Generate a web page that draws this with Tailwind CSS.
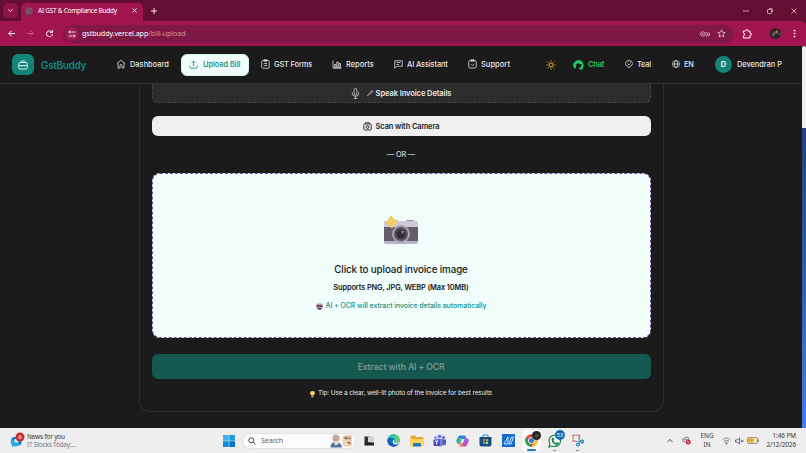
<!DOCTYPE html>
<html lang="en">
<head>
  <meta charset="UTF-8">
  <title>AI GST &amp; Compliance Buddy</title>
  <meta name="viewport" content="width=device-width, initial-scale=1.0">
  <script src="https://cdn.jsdelivr.net/npm/@tailwindcss/browser@4"></script>
</head>
<body class="w-[806px] h-[453px] overflow-hidden bg-[#1b1b1b] flex flex-col font-['Inter',sans-serif] text-[#e8e8e8] whitespace-nowrap">

  <!-- Browser tabs -->
  <div class="h-[21px] shrink-0 bg-[#640e33] flex items-center">
    <div class="ml-[3px] w-[15px] h-[15px] rounded-[5px] bg-[#8f134a] flex items-center justify-center">
      <svg class="w-[5px] h-[5px]" viewBox="0 0 10 10" fill="none" stroke="#fff" stroke-width="2"><path d="M1 3l4 4 4-4"/></svg>
    </div>
    <div class="ml-[3px] mt-[3px] w-[122px] h-[18px] rounded-t-[5px] bg-[#a01450] flex items-center pb-[3px]">
      <svg class="ml-[4px] w-[8px] h-[8px]" viewBox="0 0 16 16"><circle cx="8" cy="8" r="7.5" fill="#606066"/><path d="M2 5l5-3 1 3-3 3-3-1zM9 8l5-2-1 6-4 2-2-4z" fill="#963564"/></svg>
      <span class="ml-[5px] mt-px w-[89px] font-['Noto_Sans',sans-serif] text-[6.5px] tracking-[-0.26px] text-white">AI GST &amp; Compliance Buddy</span>
      <svg class="ml-[5px] w-[5px] h-[5px] shrink-0" viewBox="0 0 10 10" stroke="#fff" stroke-width="2"><path d="M1 1l8 8M9 1l-8 8"/></svg>
    </div>
    <svg class="ml-[8px] w-[6px] h-[6px]" viewBox="0 0 12 12" stroke="#f3dce6" stroke-width="2"><path d="M6 0v12M0 6h12"/></svg>
    <div class="ml-auto mr-[9px] flex items-center gap-[18px]">
      <svg class="w-[6px] h-[6px]" viewBox="0 0 12 12" stroke="#e0bccc" stroke-width="1.5"><path d="M0 6h12"/></svg>
      <svg class="w-[6px] h-[6px]" viewBox="0 0 12 12" fill="none" stroke="#e0bccc" stroke-width="1.5"><rect x="1" y="3" width="8" height="8" rx="1"/><path d="M4 1h5q2 0 2 2v5"/></svg>
      <svg class="w-[6px] h-[6px]" viewBox="0 0 12 12" stroke="#ecd2de" stroke-width="1.5"><path d="M1 1l10 10M11 1L1 11"/></svg>
    </div>
  </div>

  <!-- Address bar -->
  <div class="h-[25px] shrink-0 bg-[#a01450] rounded-tr-[4px] flex items-center">
    <svg class="ml-[8px] w-[7px] h-[7px]" viewBox="0 0 14 14" fill="none" stroke="#fff" stroke-width="2"><path d="M14 7H2M7 1.500L1.500 7 7 12.500"/></svg>
    <svg class="ml-[12px] w-[7px] h-[7px]" viewBox="0 0 14 14" fill="none" stroke="#c8658f" stroke-width="1.800"><path d="M0 7h12M7 1.500L12.500 7 7 12.500"/></svg>
    <svg class="ml-[12px] w-[7px] h-[7px]" viewBox="0 0 14 14" fill="none" stroke="#fff" stroke-width="2"><path d="M12 4.500A6 6 0 1 0 13 8M13 0v5H8"/></svg>
    <div class="ml-[10px] w-[671px] h-[18px] rounded-full bg-[#7f1845] flex items-center shrink-0">
      <span class="ml-[2px] w-[14px] h-[14px] rounded-full bg-[#991d54] flex items-center justify-center">
        <svg class="w-[8px] h-[8px]" viewBox="0 0 16 16" fill="none" stroke="#f3dce6" stroke-width="2"><circle cx="4" cy="4" r="2"/><path d="M8 4h7M1 12h7"/><circle cx="12" cy="12" r="2"/></svg>
      </span>
      <span class="ml-[3px] font-['Noto_Sans',sans-serif] text-[7.2px] tracking-[-0.1px] text-white">gstbuddy.vercel.app<span class="text-[#d08fab]">/bill-upload</span></span>
      <svg class="ml-auto w-[10px] h-[8px]" viewBox="0 0 20 16" fill="none" stroke="#d9a0b9" stroke-width="1.800"><circle cx="5.500" cy="8" r="4.500"/><circle cx="5.500" cy="8" r="1.200"/><path d="M10 6h9v5h-3v-2h-2v3h-3"/></svg>
      <svg class="ml-[7px] mr-[8px] w-[9px] h-[9px]" viewBox="0 0 18 18" fill="none" stroke="#ecc9d8" stroke-width="1.600"><path d="M9 1.500l2.200 5 5.300.5-4 3.600 1.200 5.400L9 13.200 4.300 16l1.200-5.400-4-3.600 5.300-.5z"/></svg>
    </div>
    <svg class="ml-[8px] w-[10px] h-[10px]" viewBox="0 0 20 20" fill="none" stroke="#fff" stroke-width="2"><path d="M3 4h4.500V3a2 2 0 0 1 4 0v1H16v4.500h1a2 2 0 0 1 0 4h-1V18H3v-4.500a2.500 2.500 0 0 0 0-5z"/></svg>
    <span class="ml-[9px] w-px h-[9px] bg-[#8a1548]"></span>
    <svg class="ml-[8px] w-[11px] h-[11px]" viewBox="0 0 22 22"><circle cx="11" cy="11" r="11" fill="#292326"/><path d="M3 11l6-5 3 4-5 8z" fill="#625c5f"/><path d="M12 4l4 2-2 6-3-2z" fill="#bb7046"/><path d="M16 11l5-2-2 6z" fill="#46626b"/></svg>
    <svg class="ml-[12px] w-[3px] h-[9px]" viewBox="0 0 6 18" fill="#fff"><circle cx="3" cy="3" r="1.700"/><circle cx="3" cy="9" r="1.700"/><circle cx="3" cy="15" r="1.700"/></svg>
  </div>

  <div class="flex-1 min-h-0 flex">
    <div class="w-[802px] flex flex-col">

      <!-- Navigation -->
      <header class="h-[38px] shrink-0 border-b border-[#333] flex items-center text-[7.4px] font-medium">
        <div class="w-[116px] pl-[12px] flex items-center">
          <span class="w-[22px] h-[21px] rounded-[6px] bg-[#128478] flex items-center justify-center">
            <svg class="w-[10px] h-[10px]" viewBox="0 0 20 20" fill="none" stroke="#e7fffb" stroke-width="1.800"><rect x="1.500" y="5" width="17" height="13" rx="2.500"/><path d="M6 5V4q0-2 2-2h4q2 0 2 2v1M2 11h16M7 10v3M13 10v3"/></svg>
          </span>
          <span class="ml-[7px] pt-px text-[10px] font-semibold tracking-[-0.33px] text-[#14877b]">GstBuddy</span>
        </div>
        <div class="w-[65px] flex items-center gap-[4px]">
          <svg class="w-[10px] h-[10px] shrink-0" viewBox="0 0 20 20" fill="none" stroke="#ddd" stroke-width="1.600"><path d="M2 9l8-7 8 7M4 8v10h4v-6q2-2 4 0v6h4V8"/></svg>
          <span class="pt-px tracking-[0.04px]">Dashboard</span>
        </div>
        <div class="w-[68px] h-[22px] rounded-[6px] bg-[#f0fdfa] border border-[#d5f3ee] pl-[7px] flex items-center gap-[5px] text-[#14877b]">
          <svg class="w-[9px] h-[9px] shrink-0" viewBox="0 0 18 18" fill="none" stroke="currentColor" stroke-width="1.600"><path d="M9 12V2M5 6l4-4 4 4M1.500 11v3q0 2.500 2.500 2.500h10q2.500 0 2.500-2.500v-3"/></svg>
          <span class="pt-px tracking-[-0.02px]">Upload Bill</span>
        </div>
        <div class="w-[83px] pl-[12px] flex items-center gap-[4px]">
          <svg class="w-[9px] h-[10px] shrink-0" viewBox="0 0 18 20" fill="none" stroke="#ddd" stroke-width="1.600"><rect x="1.500" y="3" width="15" height="15.500" rx="2.500"/><path d="M6 1.500h6v3H6zM5.500 9h7M5.500 13h7"/></svg>
          <span class="pt-px tracking-[-0.12px]">GST Forms</span>
        </div>
        <div class="w-[62px] flex items-center gap-[4px]">
          <svg class="w-[10px] h-[9px] shrink-0" viewBox="0 0 20 18" fill="none" stroke="#ddd" stroke-width="1.600"><path d="M2 1v15.500h17M5 9h3v6H5zM9.500 4h3v11h-3zM14 7h3v8h-3z" /></svg>
          <span class="pt-px tracking-[0.03px]">Reports</span>
        </div>
        <div class="w-[74px] flex items-center gap-[4px]">
          <svg class="w-[9px] h-[9px] shrink-0" viewBox="0 0 18 18" fill="none" stroke="#ddd" stroke-width="1.600"><path d="M1.500 1.500h15v11h-11l-4 4zM5 5h8M5 9h5"/></svg>
          <span class="pt-px tracking-[-0.1px]">AI Assistant</span>
        </div>
        <div class="w-[78px] flex items-center gap-[4px]">
          <svg class="w-[9px] h-[10px] shrink-0" viewBox="0 0 18 20" fill="none" stroke="#ddd" stroke-width="1.600"><rect x="1.500" y="3" width="15" height="15" rx="2.500"/><path d="M6 1.500h6v3H6zM5.500 10.500l3 3 4-4"/></svg>
          <span class="pt-px tracking-[0.1px]">Support</span>
        </div>
        <svg class="w-[10px] h-[10px] shrink-0" viewBox="0 0 20 20" fill="none" stroke="#eab52a" stroke-width="1.900"><circle cx="10" cy="10" r="4"/><path d="M10 1v2.500M10 16.500V19M1 10h2.500M16.500 10H19M3.500 3.500l2 2M14.500 14.500l2 2M16.500 3.500l-2 2M5.500 14.500l-2 2"/></svg>
        <div class="w-[69px] pl-[17px] flex items-center gap-[4px] text-[#27c65d]">
          <svg class="w-[11px] h-[11px] shrink-0" viewBox="0 0 22 22" fill="#27c65d"><path d="M4 20Q-1 15 1 9 4 2 12 2q8 1 9 9 1 6-3 10l-4-4q4-3 3-7-4 1-7-2-4 2-4 6 0 4-2 6z"/><path d="M9 18q3 2 6-1l4 4h-5z"/></svg>
          <span class="pt-px tracking-[-0.15px] font-semibold">Chat</span>
        </div>
        <div class="w-[47px] flex items-center gap-[4px]">
          <svg class="w-[8px] h-[8px] shrink-0" viewBox="0 0 16 16" fill="none" stroke="#ddd" stroke-width="1.500"><path d="M8 15Q5 15 5 12 1 11 1 7q0-6 7-6t7 6q0 4-4 5 0 3-3 3z"/><path d="M4 7h1M6 4h1M10 4h1M11 7h1M6 9h4"/></svg>
          <span class="pt-px tracking-[-0.22px]">Teal</span>
        </div>
        <div class="w-[43px] flex items-center gap-[4px]">
          <svg class="w-[8px] h-[8px] shrink-0" viewBox="0 0 16 16" fill="none" stroke="#ddd" stroke-width="1.400"><circle cx="8" cy="8" r="7"/><ellipse cx="8" cy="8" rx="3" ry="7"/><path d="M1 8h14"/></svg>
          <span class="pt-px tracking-[-0.3px]">EN</span>
        </div>
        <span class="w-[17px] h-[17px] rounded-full bg-[#128478] shrink-0 flex items-center justify-center font-semibold text-white">D</span>
        <span class="ml-[5px] pt-px tracking-[-0.03px]">Devendran P</span>
      </header>

      <!-- Upload card -->
      <main class="ml-[138.5px] w-[525px] h-[328px] px-[12px] border border-t-0 border-[#2d2d2d] rounded-b-[11px] flex flex-col items-center">
        <div class="w-[499px] h-[19px] shrink-0 bg-[#2c2c2c] border border-t-0 border-dashed border-[#444] rounded-b-[6px] flex items-center justify-center">
          <svg class="w-[9px] h-[11px]" viewBox="0 0 18 24" fill="none" stroke="#ddd" stroke-width="1.600"><rect x="6" y="1" width="6" height="14" rx="3"/><path d="M2 9v3q0 6 7 6t7-6V9M9 18v5M5 23h8"/></svg>
          <svg class="ml-[6px] w-[8px] h-[8px]" viewBox="0 0 16 16"><path d="M2 14l8-9 2 2z" fill="#9c8ca5" stroke="#9c8ca5" stroke-width="1.500"/><circle cx="12" cy="4.500" r="3" fill="#746c7d"/></svg>
          <span class="ml-[2px] pt-px text-[7.5px] font-semibold tracking-[-0.08px]">Speak Invoice Details</span>
        </div>
        <div class="mt-[13px] w-[499px] h-[20px] shrink-0 bg-[#efefef] rounded-[6px] flex items-center justify-center text-[#1b1b1b]">
          <svg class="w-[9px] h-[9px]" viewBox="0 0 18 18" fill="none" stroke="currentColor" stroke-width="1.700"><rect x="1.500" y="4" width="15" height="12" rx="2"/><path d="M5 4V1.500h8V4"/><circle cx="9" cy="10" r="3"/><path d="M8.500 10h1"/></svg>
          <span class="ml-[4px] pt-px text-[7.5px] font-semibold tracking-[-0.12px]">Scan with Camera</span>
        </div>
        <div class="h-[37px] pt-[2px] shrink-0 flex items-center text-[7.3px] tracking-[-0.2px]">— OR —</div>
        <div class="w-[499px] h-[165px] shrink-0 bg-[#f0fdfa] border border-dashed border-[#6655a5] rounded-[8px] flex flex-col items-center text-[#161b1a]">
          <svg class="mt-[42px] w-[34px] h-[29px] shrink-0" viewBox="0 0 34 29">
            <rect x="22" y="4" width="8" height="5" rx="1" fill="#9289a0"/>
            <rect x="0" y="5" width="34" height="23" rx="2" fill="#bdb1d0"/>
            <path d="M2 5h30q2 0 2 3v3H0V8q0-3 2-3z" fill="#cfc8d7"/>
            <rect x="0" y="11" width="34" height="14" fill="#635e68"/>
            <circle cx="17" cy="18" r="9" fill="#aaa0b8"/>
            <circle cx="17" cy="18" r="7" fill="#56505f"/>
            <circle cx="17" cy="18" r="4.500" fill="#302b39"/>
            <circle cx="18.500" cy="16" r="1.500" fill="#817790"/>
            <path d="M7 0q3 4 7 5-4 3-6 7-3-4-7-5 4-3 6-7z" fill="#f0cd67" stroke="#f0cd67" stroke-linejoin="round"/>
          </svg>
          <p class="mt-[17px] h-[15px] leading-[15px] text-[9.8px] font-medium tracking-[-0.12px]">Click to upload invoice image</p>
          <p class="mt-[5px] h-[11px] leading-[11px] text-[7.4px] font-semibold tracking-[-0.11px]">Supports PNG, JPG, WEBP (Max 10MB)</p>
          <p class="mt-[7px] h-[12px] leading-[12px] flex items-center text-[7px] font-medium tracking-[-0.08px] text-[#219486]">
            <svg class="mr-[3px] w-[7px] h-[7px]" viewBox="0 0 14 14"><rect x="1" y="1" width="12" height="12" rx="2" fill="#a99bbd"/><path d="M0 5h14v3H0z" fill="#a65462"/><circle cx="5" cy="6" r="1.500" fill="#292435"/><circle cx="9" cy="6" r="1.500" fill="#292435"/><path d="M4 10h6v3H4z" fill="#454052"/></svg>
            AI + OCR will extract invoice details automatically
          </p>
        </div>
        <div class="mt-[16px] pt-px w-[499px] h-[25px] shrink-0 rounded-[6px] bg-[#14584f] flex items-center justify-center text-[8.6px] font-semibold tracking-[-0.1px] text-[#7b958f]">Extract with AI + OCR</div>
        <p class="mt-[9px] h-[12px] flex items-center text-[6.5px] tracking-[-0.13px]">
          <svg class="mr-[3px] w-[5px] h-[7px]" viewBox="0 0 10 14"><path d="M5 0q5 0 5 4 0 2-3 5H3Q0 6 0 4q0-4 5-4z" fill="#ffd05b"/><path d="M3 9h4v4H3z" fill="#b7a183"/></svg>
          Tip: Use a clear, well-lit photo of the invoice for best results
        </p>
      </main>
    </div>
    <div class="w-[4px] flex flex-col">
      <div class="h-[82px] bg-[#f1f1f1] rounded-t-[2px]"></div>
      <div class="flex-1 bg-gradient-to-b from-[#1d4280] to-[#427ee8]"></div>
    </div>
  </div>

  <!-- Taskbar -->
  <footer class="h-[25px] shrink-0 bg-[#eeeeee] flex items-center font-['Noto_Sans',sans-serif] text-[#333] text-[6.4px]">
    <div class="w-[217px] pl-[10px] flex items-center">
      <svg class="w-[15px] h-[17px] shrink-0" viewBox="0 0 30 34"><path d="M3 14q0-4 5-4h10q5 0 5 5v6q0 6-6 6H9l-5 3 1-5q-4-3-2-11z" fill="#1683ca"/><path d="M1 20q6-7 12-2l7 7-8 4q-9 1-11-9z" fill="#29a8e0"/><rect x="9" y="14" width="8" height="7" rx="2" fill="#d8f3ff"/><circle cx="20" cy="10" r="9" fill="#c62f2b"/><text x="20" y="14" text-anchor="middle" font-size="12" font-family="Noto Sans" fill="#fff">6</text></svg>
      <div class="ml-[2px] leading-[8px] tracking-[-0.14px]"><div>News for you</div><div class="text-[#777] tracking-[-0.22px]">IT Stocks Today:...</div></div>
    </div>
    <div class="w-[23px] flex justify-center">
      <svg class="w-[12px] h-[12px]" viewBox="0 0 24 24"><path d="M0 0h11.500v11.500H0z" fill="#39b5eb"/><path d="M12.500 0H24v11.500H12.500z" fill="#209bdf"/><path d="M0 12.500h11.500V24H0z" fill="#1689d8"/><path d="M12.500 12.500H24V24H12.500z" fill="#0874cf"/></svg>
    </div>
    <div class="ml-[2px] w-[114px] h-[16px] rounded-full bg-[#fbfbfb] border border-[#e3e3e3] flex items-center pl-[5px] pr-[2px] text-[7.2px] text-[#666]">
      <svg class="mr-[5px] w-[8px] h-[8px]" viewBox="0 0 16 16" fill="none" stroke="#333" stroke-width="1.800"><circle cx="6.500" cy="6.500" r="5"/><path d="M10.500 10.500L15 15"/></svg>
      <span class="tracking-[-0.1px]">Search</span>
      <svg class="ml-auto w-[24px] h-[14px]" viewBox="0 0 48 28"><path d="M3 27q0-10 10-12 12 2 13 12z" fill="#4f7599"/><circle cx="14" cy="9" r="7" fill="#d3a08a"/><path d="M7 8q0-8 8-7 7 1 6 9-5-5-14-2z" fill="#b9b1ac"/><path d="M8 14q6 3 11-1v7l-6 3z" fill="#e3dfdc"/><rect x="27" y="2" width="19" height="23" rx="5" fill="#ead4b5"/><path d="M31 6q4-2 7 2l-2 3-5-1zM36 16q5-2 8 2l-4 3z" fill="#95705a"/><circle cx="41" cy="8" r="3" fill="#bd916f"/></svg>
    </div>
    <div class="ml-[2px] flex items-center">
      <div class="w-[23px] flex justify-center">
        <svg class="w-[11px] h-[10px]" viewBox="0 0 22 20"><path d="M1 1h12v14H1z" fill="#333"/><path d="M8 1h12v12H8z" fill="#d3d3d3"/><path d="M1 13h19v6H1z" fill="#222"/></svg>
      </div>
      <div class="w-[23px] ml-[1px] flex justify-center">
        <svg class="w-[13px] h-[13px]" viewBox="0 0 26 26"><circle cx="13" cy="13" r="12.500" fill="#1678c7"/><path d="M1 11Q3 0 14 1q11 1 11 11 0 6-8 6-4-1-2-4 1-6-5-7-6 0-9 4z" fill="#38c6b2"/><path d="M14 1q11 1 11 11 0 6-8 6-3-1-2-3 6-7-1-14z" fill="#65cf72"/><path d="M1 12q4-6 9-3-5 6 1 12 5 4 11 0-3 5-10 4Q1 23 1 12z" fill="#155eae"/><path d="M12 12q2 0 3 2-2 4 2 4 5 0 8-3-2 6-8 6-7-1-5-9z" fill="#eee"/></svg>
      </div>
      <div class="w-[23px] flex justify-center">
        <svg class="w-[14px] h-[12px]" viewBox="0 0 28 24"><path d="M1 3q0-2 2-2h7l3 3h11q3 0 3 3v14H1z" fill="#eba92d"/><path d="M1 8h26v12q0 3-3 3H4q-3 0-3-3z" fill="#ffd35c"/><path d="M6 18q0-2 2-2h12q2 0 2 2v5H6z" fill="#197fc1"/></svg>
      </div>
      <div class="w-[23px] flex justify-center">
        <svg class="w-[13px] h-[13px]" viewBox="0 0 26 26"><circle cx="13" cy="5" r="4" fill="#7780e0"/><circle cx="21" cy="7" r="3" fill="#5b62c6"/><circle cx="5" cy="7" r="3" fill="#8b93ec"/><path d="M7 10h13v9q0 6-6 6t-7-6z" fill="#747ee0"/><path d="M18 11h8v7q0 5-6 5z" fill="#5059c9"/><rect x="1" y="11" width="13" height="13" rx="2" fill="#4c46b7"/><path d="M4 14h7M7.500 14v7" stroke="#fff" stroke-width="2"/></svg>
      </div>
      <div class="w-[23px] flex justify-center">
        <svg class="w-[13px] h-[12px]" viewBox="0 0 26 24"><path d="M8 1h9q2 0 3 4l1 3h-6l-5 9H5q-5 0-4-6l3-7q1-3 4-3z" fill="#2887dd"/><path d="M2 15l3-9h7l-3 11H5q-3 0-3-2z" fill="#35bd8a"/><path d="M20 7q6 0 5 6l-3 7q-1 3-4 3H9q-2 0-3-4l-1-2h7l4-10z" fill="#d853ad"/><path d="M5 17h7l-2 6H9q-3 0-4-6z" fill="#f3a63b"/><path d="M17 7h4q5 0 4 6l-2 4h-7z" fill="#9e5fd5"/><path d="M11 8h6l-3 8H9z" fill="#eee"/></svg>
      </div>
      <div class="w-[23px] flex justify-center">
        <svg class="w-[13px] h-[13px]" viewBox="0 0 26 26"><path d="M8 6V2h10v4" fill="none" stroke="#2a94d2" stroke-width="2"/><path d="M1 6h24v15q0 4-4 4H5q-4 0-4-4z" fill="#174f80"/><path d="M8 10h4.500v4.500H8z" fill="#e65c37"/><path d="M13.500 10H18v4.500h-4.500z" fill="#86bd38"/><path d="M8 15.500h4.500V20H8z" fill="#35ade5"/><path d="M13.500 15.500H18V20h-4.500z" fill="#ffc73b"/></svg>
      </div>
      <div class="w-[23px] flex justify-center">
        <svg class="w-[13px] h-[13px]" viewBox="0 0 26 26"><path d="M0 0h26v26H0z" fill="#176bd0"/><path d="M4 20L12 6v14zM14 20l5-14h4l-5 14z" fill="none" stroke="#d9efff" stroke-width="1.800"/></svg>
      </div>
      <div class="w-[23px] h-[23px] flex justify-center items-center">
        <div class="relative w-[19px] h-[21px] rounded-[2px] bg-[#fafafa] flex items-center justify-center">
          <svg class="w-[13px] h-[13px]" viewBox="0 0 26 26"><circle cx="13" cy="13" r="12.500" fill="#dd4436"/><path d="M2 7l8 13 3 5.500Q1 25 .5 13q0-3 1.500-6z" fill="#2ca450"/><path d="M13 25.500L20 13l-3-5h7q4 9-2 14-4 4-9 3.500z" fill="#f5c52e"/><circle cx="13" cy="13" r="6.500" fill="#fff"/><circle cx="13" cy="13" r="5" fill="#3178df"/></svg>
          <svg class="absolute right-0 top-[1px] w-[9px] h-[9px]" viewBox="0 0 18 18"><circle cx="9" cy="9" r="9" fill="#292326"/><path d="M5 10l6-5 3 3-5 6z" fill="#694a3e"/></svg>
          <span class="absolute bottom-0 w-[9px] h-[2px] rounded-full bg-[#2278c5]"></span>
        </div>
      </div>
      <div class="relative w-[23px] h-[21px] flex justify-center items-center">
        <svg class="w-[14px] h-[14px]" viewBox="0 0 28 28"><path d="M2 26l2-7Q0 11 5 6q7-7 16-1 7 7 2 15-6 7-15 4z" fill="#fff" stroke="#248856" stroke-width="2.500"/><path d="M8 8l3-1 2 4-2 2q2 4 5 5l2-2 4 2q-1 4-5 4-9-2-10-11z" fill="#248856"/></svg>
        <span class="absolute right-[1px] top-0 w-[10px] h-[10px] rounded-full bg-[#1769b5] text-white text-[5.5px] flex items-center justify-center">53</span>
        <span class="absolute bottom-0 w-[3px] h-[1.5px] rounded-full bg-[#858585]"></span>
      </div>
      <div class="relative w-[23px] h-[21px] flex justify-center items-center">
        <svg class="w-[12px] h-[13px]" viewBox="0 0 24 26" fill="none"><path d="M15 2H2v12h6M15 2v11" stroke="#bc5147" stroke-width="2.500" stroke-dasharray="3 1.500"/><path d="M14 5v15M7 15h14" stroke="#8e9da9" stroke-width="2"/><circle cx="12" cy="21" r="3" stroke="#238ccc" stroke-width="2.500"/><circle cx="20" cy="15" r="3" stroke="#238ccc" stroke-width="2.500"/></svg>
        <span class="absolute bottom-0 w-[3px] h-[1.5px] rounded-full bg-[#858585]"></span>
      </div>
    </div>
    <div class="ml-auto mr-[10px] flex items-center">
      <svg class="w-[6px] h-[5px]" viewBox="0 0 12 10" fill="none" stroke="#333" stroke-width="1.800"><path d="M1 8l5-5 5 5"/></svg>
      <svg class="ml-[9px] w-[9px] h-[9px]" viewBox="0 0 18 18" fill="none"><path d="M7 12H4q-3-1-3-4t4-3q1-3 5-3 4 1 4 5" stroke="#666" stroke-width="1.800"/><path d="M4 8q5-3 9 0" stroke="#666" stroke-width="1.500"/><circle cx="12.500" cy="12" r="5" fill="#c92f40"/><path d="M10.500 10l4 4" stroke="#fff" stroke-width="1.500"/></svg>
      <div class="ml-[9px] w-[14px] text-center leading-[8.5px]">ENG<br>IN</div>
      <svg class="ml-[8px] w-[9px] h-[8px]" viewBox="0 0 18 16" fill="none" stroke="#777" stroke-width="1.800"><path d="M1 6q8-8 16 0M4 9q5-5 10 0M6.500 12q2.500-3 5 0"/><circle cx="9" cy="13.500" r="1" fill="#777"/></svg>
      <svg class="ml-[4px] w-[9px] h-[8px]" viewBox="0 0 18 16" fill="none" stroke="#444" stroke-width="1.500"><path d="M1 6h3l5-4v12l-5-4H1zM12 5.500l5 5M17 5.500l-5 5"/></svg>
      <svg class="ml-[3px] w-[12px] h-[7px]" viewBox="0 0 24 14"><rect x="1" y="1" width="20" height="12" rx="3" fill="#f5e6bd" stroke="#777" stroke-width="1.500"/><path d="M3 3h10v8H3z" fill="#e6a520"/><path d="M22 5h2v4h-2z" fill="#777"/></svg>
      <div class="w-[37px] text-right leading-[8.500px] tracking-[-0.08px]">1:46 PM<br>2/12/2026</div>
    </div>
  </footer>

</body>
</html>
